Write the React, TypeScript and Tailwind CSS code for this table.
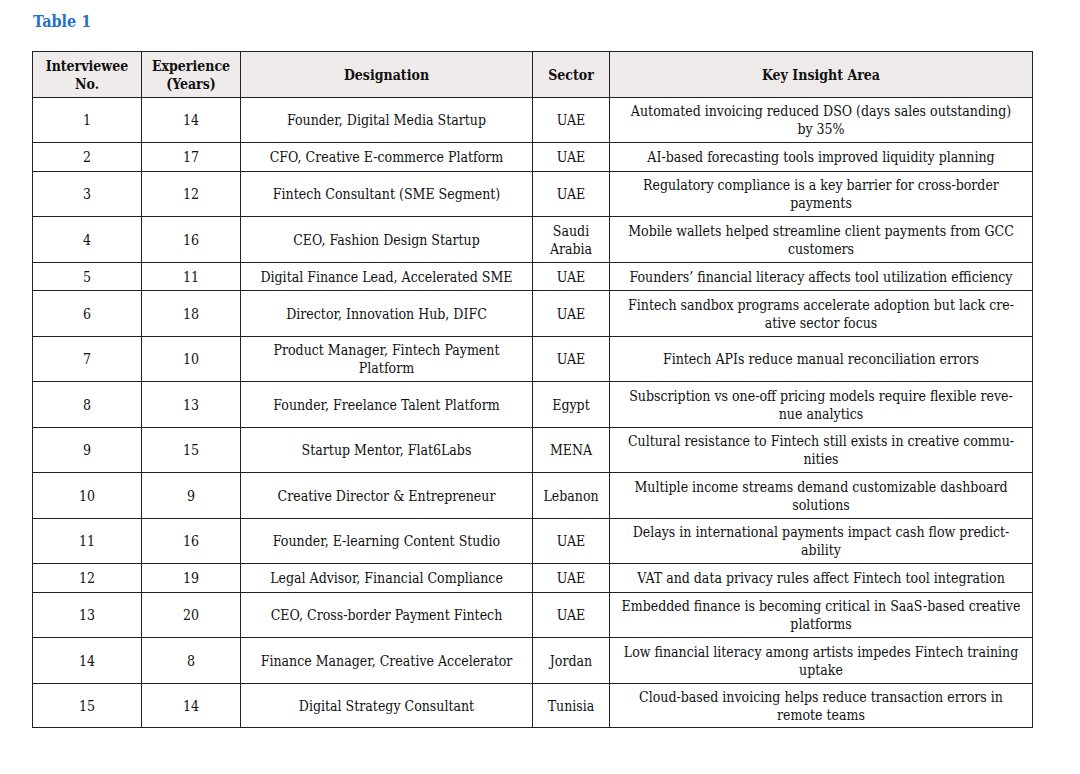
const ROWS: { no: string; exp: string; role: string[]; sector: string[]; insight: string[]; h: number }[] = [
  { no: "1", exp: "14", role: ["Founder, Digital Media Startup"], sector: ["UAE"], insight: ["Automated invoicing reduced DSO (days sales outstanding)", "by 35%"], h: 45 },
  { no: "2", exp: "17", role: ["CFO, Creative E-commerce Platform"], sector: ["UAE"], insight: ["AI-based forecasting tools improved liquidity planning"], h: 29 },
  { no: "3", exp: "12", role: ["Fintech Consultant (SME Segment)"], sector: ["UAE"], insight: ["Regulatory compliance is a key barrier for cross-border", "payments"], h: 45 },
  { no: "4", exp: "16", role: ["CEO, Fashion Design Startup"], sector: ["Saudi", "Arabia"], insight: ["Mobile wallets helped streamline client payments from GCC", "customers"], h: 46 },
  { no: "5", exp: "11", role: ["Digital Finance Lead, Accelerated SME"], sector: ["UAE"], insight: ["Founders’ financial literacy affects tool utilization efficiency"], h: 28 },
  { no: "6", exp: "18", role: ["Director, Innovation Hub, DIFC"], sector: ["UAE"], insight: ["Fintech sandbox programs accelerate adoption but lack cre-", "ative sector focus"], h: 46 },
  { no: "7", exp: "10", role: ["Product Manager, Fintech Payment", "Platform"], sector: ["UAE"], insight: ["Fintech APIs reduce manual reconciliation errors"], h: 45 },
  { no: "8", exp: "13", role: ["Founder, Freelance Talent Platform"], sector: ["Egypt"], insight: ["Subscription vs one-off pricing models require flexible reve-", "nue analytics"], h: 46 },
  { no: "9", exp: "15", role: ["Startup Mentor, Flat6Labs"], sector: ["MENA"], insight: ["Cultural resistance to Fintech still exists in creative commu-", "nities"], h: 45 },
  { no: "10", exp: "9", role: ["Creative Director & Entrepreneur"], sector: ["Lebanon"], insight: ["Multiple income streams demand customizable dashboard", "solutions"], h: 46 },
  { no: "11", exp: "16", role: ["Founder, E-learning Content Studio"], sector: ["UAE"], insight: ["Delays in international payments impact cash flow predict-", "ability"], h: 45 },
  { no: "12", exp: "19", role: ["Legal Advisor, Financial Compliance"], sector: ["UAE"], insight: ["VAT and data privacy rules affect Fintech tool integration"], h: 29 },
  { no: "13", exp: "20", role: ["CEO, Cross-border Payment Fintech"], sector: ["UAE"], insight: ["Embedded finance is becoming critical in SaaS-based creative", "platforms"], h: 45 },
  { no: "14", exp: "8", role: ["Finance Manager, Creative Accelerator"], sector: ["Jordan"], insight: ["Low financial literacy among artists impedes Fintech training", "uptake"], h: 46 },
  { no: "15", exp: "14", role: ["Digital Strategy Consultant"], sector: ["Tunisia"], insight: ["Cloud-based invoicing helps reduce transaction errors in", "remote teams"], h: 44 },
];

function Lines({ lines }: { lines: string[] }) {
  return (
    <>
      {lines.map((l, i) => (
        <span key={i} className="block whitespace-nowrap">
          {l}
        </span>
      ))}
    </>
  );
}

const cell = "border border-[#222] text-center align-middle p-0";

export default function App() {
  return (
    <div className="w-[1080px] h-[774px] bg-white font-['DejaVu_Serif_Condensed','Liberation_Serif',serif] text-[#111]">
      <div className="pl-[33px] pt-[11px] h-[51px]">
        <h1 className="text-[16px] leading-[22px] font-bold text-[#2272c9]">Table 1</h1>
      </div>
      <table className="ml-[32px] w-[1000px] table-fixed border-collapse text-[14px] leading-[18px]">
        <colgroup>
          <col className="w-[109px]" />
          <col className="w-[99px]" />
          <col className="w-[292px]" />
          <col className="w-[77px]" />
          <col className="w-[423px]" />
        </colgroup>
        <thead>
          <tr className="h-[46px] bg-[#efebeb] font-bold">
            <th className={cell}>
              <Lines lines={["Interviewee", "No."]} />
            </th>
            <th className={cell}>
              <Lines lines={["Experience", "(Years)"]} />
            </th>
            <th className={cell}>Designation</th>
            <th className={cell}>Sector</th>
            <th className={cell}>Key Insight Area</th>
          </tr>
        </thead>
        <tbody>
          {ROWS.map((r) => (
            <tr key={r.no} style={{ height: r.h }}>
              <td className={cell}>{r.no}</td>
              <td className={cell}>{r.exp}</td>
              <td className={cell}>
                <Lines lines={r.role} />
              </td>
              <td className={cell}>
                <Lines lines={r.sector} />
              </td>
              <td className={cell}>
                <Lines lines={r.insight} />
              </td>
            </tr>
          ))}
        </tbody>
      </table>
    </div>
  );
}
